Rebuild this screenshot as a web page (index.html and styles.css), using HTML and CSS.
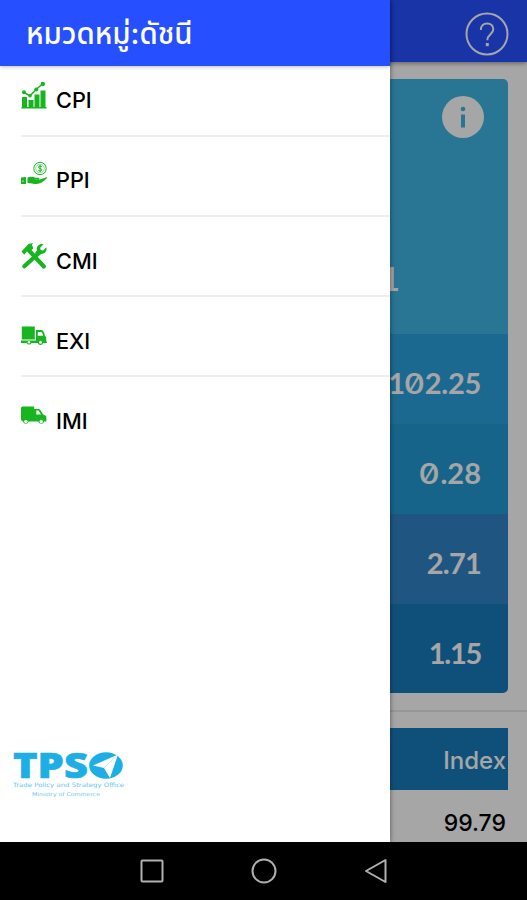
FILE: index.html
```html
<!DOCTYPE html>
<html lang="th">
<head>
    <meta charset="UTF-8">
    <meta name="viewport" content="width=device-width, initial-scale=1.0">
    <title>หมวดหมู่:ดัชนี</title>
    <link rel="stylesheet" href="styles.css">
</head>
<body>
    <div class="screen">
        <header class="app-bar">
            <svg class="help" viewBox="0 0 44 44">
                <circle cx="22" cy="22" r="20.5"/>
                <path d="M15.800 18c0-4 2.600-6.500 6.300-6.500s6.200 2.300 6.200 5.700c0 5.200-6 5-6 11"/>
                <path d="M22.300 31v3.200" stroke-width="3"/>
            </svg>
        </header>
        <main class="content">
            <section class="card">
                <div class="card-top">
                    <svg class="info" viewBox="0 0 42 42">
                        <circle cx="21" cy="21" r="21" fill="#fff"/>
                        <circle cx="21" cy="13" r="2.300" fill="#3fb4e4"/>
                        <path d="M19 18.500h4v13h-4z" fill="#3fb4e4"/>
                    </svg>
                    <div class="headline">1</div>
                </div>
                <div class="row row-1">1<span class="zero">0</span>2.25</div>
                <div class="row row-2"><span class="zero">0</span>.28</div>
                <div class="row row-3">2.71</div>
                <div class="row row-4">1.15</div>
            </section>
            <section class="table">
                <div class="table-head">Index</div>
                <div class="table-row">99.79</div>
            </section>
        </main>
        <div class="overlay"></div>

        <aside class="drawer">
            <h1 class="drawer-title">หมวดหมู่:ดัชนี</h1>
            <ul class="menu">
                <li>
                    <svg class="icon" viewBox="0 0 26 30">
                        <path d="M1 17h5v11H1zM7.500 20h5v8h-5zM13.500 14.500h5V28h-5zM19.500 10.500h5V28h-5zM.5 27h25v1.500H.5z"/>
                        <path class="line" d="M3 12.500l6 3.300 6-6.300 6.500-5.500"/>
                        <circle cx="3" cy="12.300" r="2"/><circle cx="9" cy="15.700" r="1.800"/><circle cx="15.300" cy="9.500" r="2"/><circle cx="21.800" cy="4" r="2.200"/>
                    </svg>
                    <span>CPI</span>
                </li>
                <li>
                    <svg class="icon" viewBox="0 0 26 30">
                        <circle class="line thin" cx="19" cy="8.500" r="6.200"/>
                        <circle class="line faint" cx="19" cy="8.500" r="4.300"/>
                        <path class="line thin" d="M20.800 6.700c-1-1.100-3.300-.8-3.300.5 0 1.500 3.400 1 3.400 2.600 0 1.400-2.600 1.600-3.600.4M19.100 5v7"/>
                        <path d="M0 17.500l5-.5V24H0zM6.500 17.500c3-1.500 5.500-.8 8 .2h3c1.300.2 1.400 1.700 0 2h-4c4 1 8-1.200 11.500-2.500 1.200-.2 1.300.8.5 1.400-3 3-6.500 5.500-10 5.500-3.500 0-5.500-.9-9-1.100z"/>
                        <path d="M1.400 20.500h1v1.200h-1z" fill="#fff"/>
                    </svg>
                    <span>PPI</span>
                </li>
                <li>
                    <svg class="icon" viewBox="0 0 26 30">
                        <path class="line thick" d="M8 9.500l14.800 16M3.400 25.300L18 12"/>
                        <path d="M.5 10.500L7.500 3 12 2l-1 2 1.200 3.200-3 3.300-2.700-.8-3.200 4z"/>
                        <path d="M22.500 3.200l-3.400 3.500.6 2.300 2.300.6 3.300-3.400c1.100 4-2 7.400-5.800 6.700l-2.200 2-3.200-3.200 1.800-2.200c-1-4 2.500-7.600 6.600-6.300z"/>
                    </svg>
                    <span>CMI</span>
                </li>
                <li>
                    <svg class="icon" viewBox="0 0 26 30">
                        <path d="M.8 5.500h13v13H.8zM0 19.500h15V9h5.200c2.200 0 3.400 3.200 3.800 6l1.200 1v4.500h1V22h-4a2.900 2.900 0 0 1-5.500 0h-6a2.900 2.900 0 0 1-5.200 0H0z"/>
                        <path d="M16.800 11h3.300c1 0 1.700 2.200 2 3.800h-5.300z" fill="#fff"/>
                        <circle cx="8" cy="21.200" r="1.300" fill="#fff"/><circle cx="19.500" cy="21.200" r="1.500" fill="#fff"/>
                    </svg>
                    <span>EXI</span>
                </li>
                <li>
                    <svg class="icon" viewBox="0 0 26 30">
                        <path d="M0 7q0-1.500 1.500-1.500h11.700V8h4.300q1.200 0 2 1.200l2.700 4.300 2.200 1q1 .5 1 1.800v4.200h-2.300a3 3 0 0 1-5.800 0H7.800a3 3 0 0 1-5.800 0L0 19z"/>
                        <path d="M15.300 9.500h2.200l2.500 4h-4.700z" fill="#fff"/>
                        <circle cx="4.900" cy="20.500" r="1.700" fill="#fff"/><circle cx="20.200" cy="20.500" r="1.700" fill="#fff"/>
                    </svg>
                    <span>IMI</span>
                </li>
            </ul>
            <div class="brand">
                <div class="brand-name">
                    <svg class="logo-text" viewBox="0 0 76 28">
                        <text x="0" y="27" textLength="75" lengthAdjust="spacingAndGlyphs">TPS</text>
                    </svg>
                    <svg class="logo-mark" viewBox="0 0 34 28">
                        <ellipse cx="17" cy="14.500" rx="16.800" ry="13.200" fill="#1caee4"/>
                        <path d="M29 3.500L4 14.500l11 2.500 6 10z" fill="#fff"/>
                        <path d="M29 3.500L15 17" stroke="#bfe9f8"/>
                    </svg>
                </div>
                <svg class="brand-sub" viewBox="0 0 112 9">
                    <text x="0" y="6.500" textLength="111" lengthAdjust="spacingAndGlyphs">Trade Policy and Strategy Office</text>
                </svg>
                <svg class="brand-sub" viewBox="0 0 112 9">
                    <text x="19" y="6.500" font-size="5" textLength="68" lengthAdjust="spacingAndGlyphs">Ministry of Commerce</text>
                </svg>
            </div>
        </aside>
    </div>
    <nav class="nav-bar">
        <svg viewBox="0 0 26 26"><rect x="2.500" y="2.500" width="21" height="21" rx="1"/></svg>
        <svg viewBox="0 0 26 26"><circle cx="13" cy="13" r="11.500"/></svg>
        <svg viewBox="0 0 26 26"><path d="M22.500 2v22L3 13z"/></svg>
    </nav>
</body>
</html>
```

FILE: styles.css
```css
:root {
    --primary-blue: #2650ff;
    --icon-green: #17b51f;
    --logo-blue: #1caee4;
}

* {
    margin: 0;
    padding: 0;
    box-sizing: border-box;
}

body {
    width: 527px;
    height: 900px;
    display: flex;
    flex-direction: column;
    overflow: hidden;
    font-family: Inter, "Noto Sans Thai", "Noto Sans", sans-serif;
    background: #000;
}

.screen {
    position: relative;
    height: 842px;
    overflow: hidden;
    background: #fff;
}

.app-bar {
    height: 62px;
    padding: 12px 18px 0;
    display: flex;
    justify-content: flex-end;
    background: var(--primary-blue);
    box-shadow: 0 1px 5px rgba(0, 0, 0, 0.45);
}

.help {
    width: 44px;
    height: 44px;
    fill: none;
    stroke: #fff;
    stroke-width: 2;
}

.card {
    margin: 17px 19px 17px;
    border-radius: 5px;
    overflow: hidden;
    color: #fff;
}

.card-top {
    height: 255px;
    padding: 17px 24px 0;
    display: flex;
    flex-direction: column;
    align-items: flex-end;
    gap: 119px;
    background: #3fb4e4;
}

.info {
    width: 42px;
    height: 42px;
}

.headline {
    width: 100%;
    padding-right: 84px;
    text-align: right;
    font-family: Lato, sans-serif;
    font-size: 33px;
    font-weight: 700;
    line-height: 42px;
}

.row {
    height: 90px;
    padding: 9px 27px 0 0;
    text-align: right;
    font-family: Lato, sans-serif;
    font-size: 29px;
    font-weight: 700;
    line-height: 79px;
}

/* slashed zero */
.zero {
    display: inline-block;
    margin-right: 2px;
    transform: scaleX(1.15);
    font-family: Inter, sans-serif;
    font-size: 28.5px;
    font-weight: 500;
    font-feature-settings: "zero";
}

.row-1 {
    background: #2aa2de;
    letter-spacing: -0.3px;
}

.row-2 { background: #239ad4; }

.row-3 {
    background: #2e84c6;
    letter-spacing: -0.8px;
}

.row-4 {
    height: 89px;
    background: #177bbc;
    letter-spacing: -1.3px;
}

.table {
    padding: 16px 19px 0;
    border-top: 2px solid #e8e8e8;
    text-align: right;
    font-size: 24px;
    font-weight: 500;
}

.table-head {
    height: 62px;
    padding-right: 2px;
    background: #177bbc;
    color: #fff;
    line-height: 65px;
}

.table-row {
    padding-right: 2px;
    font-size: 23px;
    line-height: 66px;
}

.overlay {
    position: absolute;
    inset: 0;
    background: rgba(0, 0, 0, 0.35);
}

.drawer {
    position: absolute;
    top: 0;
    left: 0;
    width: 390px;
    height: 100%;
    display: flex;
    flex-direction: column;
    background: #fff;
    box-shadow: 0 0 5px rgba(0, 0, 0, 0.5);
}

.drawer-title {
    height: 66px;
    padding: 0 26px;
    background: var(--primary-blue);
    color: #fff;
    font-size: 29.4px;
    font-weight: 500;
    line-height: 67px;
    box-shadow: 0 1px 4px rgba(0, 0, 0, 0.25);
}

.menu {
    flex: 1;
    list-style: none;
}

.menu li {
    height: 80.25px;
    margin-left: 21px;
    display: flex;
    align-items: flex-end;
    gap: 9px;
    border-bottom: 2px solid #eee;
    font-size: 21.7px;
    font-weight: 500;
}

.menu li:first-child {
    height: 70.5px;
}

.menu li:last-child {
    border-bottom-color: transparent;
}

.menu span {
    padding-bottom: 20.5px;
    line-height: 28px;
}

.icon {
    width: 26px;
    height: 30px;
    margin-bottom: 24.5px;
    fill: var(--icon-green);
}

.icon .line {
    fill: none;
    stroke: var(--icon-green);
    stroke-width: 1.5;
}

.icon .thin {
    stroke-width: 1;
}

.icon .faint {
    stroke-width: 0.5;
}

.icon .thick {
    stroke-width: 4.2;
    stroke-linecap: round;
}

.brand {
    width: 112px;
    margin: 0 0 44px 13px;
    display: flex;
    flex-direction: column;
}

.brand-name {
    height: 29px;
    display: flex;
}

.logo-text {
    width: 76px;
    height: 28px;
    overflow: visible;
    font-family: "Open Sans", sans-serif;
    font-size: 35px;
    font-weight: 800;
    fill: var(--logo-blue);
    stroke: var(--logo-blue);
    stroke-width: 0.6;
}

.logo-mark {
    width: 34px;
    height: 28px;
    fill: none;
}

.brand-sub {
    width: 112px;
    height: 9px;
    font-family: "DejaVu Sans", sans-serif;
    font-size: 6px;
    fill: #64c8ec;
}

.nav-bar {
    height: 58px;
    padding-left: 1px;
    display: flex;
    justify-content: center;
    align-items: center;
    gap: 86px;
}

.nav-bar svg {
    width: 26px;
    height: 26px;
    fill: none;
    stroke: #b0b0b0;
    stroke-width: 2;
    stroke-linejoin: round;
}
```
